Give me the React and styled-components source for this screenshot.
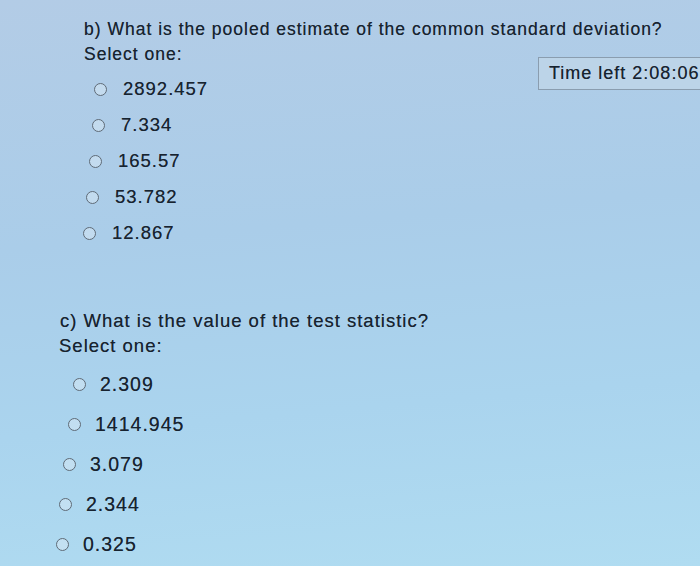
import React from "react";
import styled, { createGlobalStyle } from "styled-components";

const Global = createGlobalStyle`
  html, body {
    margin: 0;
    padding: 0;
    width: 700px;
    height: 566px;
    overflow: hidden;
  }
  body {
    font-family: "Liberation Sans", Arial, Helvetica, sans-serif;
    background: #afd2ea;
  }
`;

const Page = styled.div`
  position: relative;
  width: 700px;
  height: 566px;
  overflow: hidden;
  padding-top: 17px;
  box-sizing: border-box;
  color: #17232f;
  letter-spacing: 1px;
  background: linear-gradient(175deg, #b3cce6 0%, #aacde9 40%, #aad4ee 70%, #b0dcf1 100%);
`;

const Section = styled.section`
  display: flex;
  flex-direction: column;
  margin-top: ${(p) => p.$top || 0}px;
  font-size: ${(p) => p.$size}px;
`;

const Line = styled.div`
  line-height: 25px;
  height: 25px;
  margin-left: ${(p) => p.$indent}px;
  white-space: nowrap;
  text-shadow: 0 0 0.4px rgba(23, 35, 47, 0.6);
`;

const OptionList = styled.div`
  display: flex;
  flex-direction: column;
  margin-top: ${(p) => p.$top}px;
  font-size: ${(p) => p.$size}px;
`;

const Option = styled.label`
  display: flex;
  align-items: center;
  height: ${(p) => p.$rowH}px;
  margin-left: ${(p) => p.$indent}px;
  gap: ${(p) => p.$gap}px;
  white-space: nowrap;
  text-shadow: 0 0 0.4px rgba(23, 35, 47, 0.6);
`;

const Radio = styled.span`
  flex: none;
  width: 11px;
  height: 11px;
  border-radius: 50%;
  border: 1.6px solid #5f6b77;
  background: rgba(214, 232, 244, 0.55);
  margin-top: 1px;
`;

const Timer = styled.div`
  position: absolute;
  left: 538px;
  top: 57px;
  width: 180px;
  height: 33px;
  box-sizing: border-box;
  border: 1px solid #8a9daf;
  background: #bcd4e8;
  padding-left: 10px;
  font-size: 18px;
  line-height: 31px;
  white-space: nowrap;
  text-shadow: 0 0 0.4px rgba(23, 35, 47, 0.6);
`;

const sectionB = {
  question: "b) What is the pooled estimate of the common standard deviation?",
  size: 17.5,
  optSize: 18.5,
  qIndent: 84,
  sIndent: 84,
  listTop: 4,
  rowH: 36,
  gap: 16,
  options: [
    { v: "2892.457", x: 94 },
    { v: "7.334", x: 92 },
    { v: "165.57", x: 89 },
    { v: "53.782", x: 86 },
    { v: "12.867", x: 83 },
  ],
};

const sectionC = {
  question: "c) What is the value of the test statistic?",
  size: 18.5,
  optSize: 19.5,
  qIndent: 60,
  sIndent: 59,
  listTop: 6,
  rowH: 40,
  gap: 14,
  options: [
    { v: "2.309", x: 73 },
    { v: "1414.945", x: 68 },
    { v: "3.079", x: 63 },
    { v: "2.344", x: 59 },
    { v: "0.325", x: 56 },
  ],
};

function Question({ data, top }) {
  return (
    <Section $top={top} $size={data.size}>
      <Line $indent={data.qIndent}>{data.question}</Line>
      <Line $indent={data.sIndent}>Select one:</Line>
      <OptionList $top={data.listTop} $size={data.optSize}>
        {data.options.map((o) => (
          <Option key={o.v} $indent={o.x} $rowH={data.rowH} $gap={data.gap}>
            <Radio />
            <span>{o.v}</span>
          </Option>
        ))}
      </OptionList>
    </Section>
  );
}

export default function App() {
  return (
    <>
      <Global />
      <Page>
        <Question data={sectionB} top={0} />
        <Question data={sectionC} top={57} />
        <Timer>Time left 2:08:06</Timer>
      </Page>
    </>
  );
}
